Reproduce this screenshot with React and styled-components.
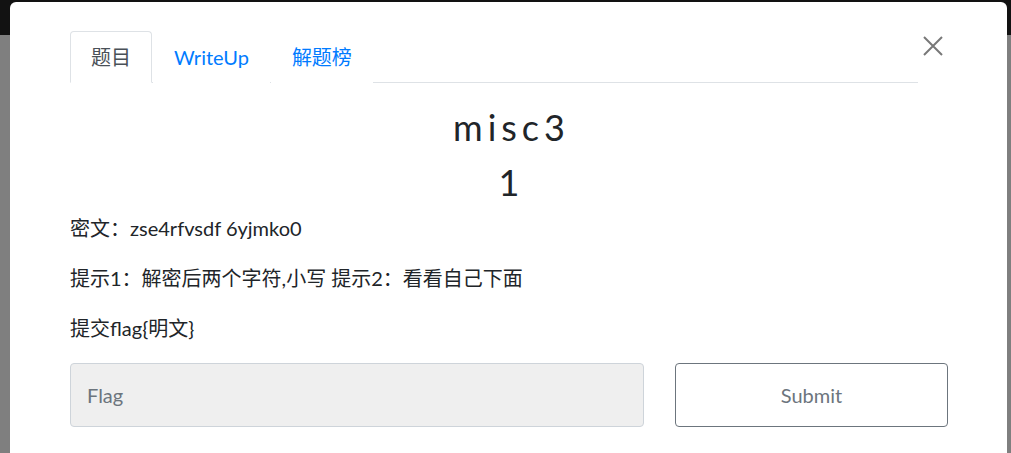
import React from "react"
import styled, { createGlobalStyle } from "styled-components"

const GlobalStyle = createGlobalStyle`
  html, body {
    margin: 0;
    padding: 0;
  }
  body {
    font-family: Lato, "Noto Sans CJK SC", sans-serif;
    background: #7f7f7f;
    overflow: hidden;
  }
  * {
    box-sizing: border-box;
  }
`

const Page = styled.div`
  position: relative;
  width: 1011px;
  height: 453px;
  overflow: hidden;
  background: #7f7f7f;
`

const TopBar = styled.div`
  height: 35px;
  background: #121212;
`

const Modal = styled.div`
  position: absolute;
  top: 2px;
  left: 10px;
  width: 997px;
  height: 480px;
  background: #fff;
  border-radius: 6px;
  padding: 29px 59px 0 60px;
  color: #212529;
`

const Header = styled.div`
  display: flex;
  align-items: flex-start;
`

const Tabs = styled.ul`
  flex: 1;
  display: flex;
  list-style: none;
  margin: 0;
  padding: 0;
  border-bottom: 1px solid #dee2e6;
`

const Tab = styled.li`
  height: 52px;
  margin-bottom: -1px;
  margin-right: 1px;
  padding: 0 20px;
  line-height: 50px;
  font-size: 20px;
  color: ${(p) => (p.$active ? "#495057" : "#007bff")};
  border: 1px solid ${(p) => (p.$active ? "#dee2e6" : "transparent")};
  border-bottom-color: ${(p) => (p.$active ? "#fff" : "transparent")};
  border-radius: 4px 4px 0 0;
  background: #fff;
`

const Close = styled.button`
  width: 30px;
  height: 20px;
  margin-top: 5px;
  padding: 0;
  border: 0;
  background: none;
  display: flex;
  justify-content: center;
  svg {
    display: block;
  }
`

const Title = styled.h2`
  margin: ${(p) => p.$gap || "23px"} 0 0;
  padding-left: ${(p) => p.$spacing || "0"};
  text-align: center;
  font-size: 36px;
  font-weight: 400;
  line-height: 1.2;
  letter-spacing: ${(p) => p.$spacing || "0"};
  color: #212529;
`

const Body = styled.div`
  margin-top: 9px;
`

const Para = styled.p`
  margin: 0 0 20px;
  font-size: 20px;
  line-height: 30px;
  color: #212529;
`

const Row = styled.div`
  display: grid;
  grid-template-columns: 574px 273px;
  column-gap: 31px;
`

const FlagInput = styled.input`
  height: 64px;
  padding: 0 16px;
  font-family: inherit;
  font-size: 20px;
  background: #efefef;
  border: 1px solid #ced4da;
  border-radius: 4px;
  color: #495057;
  outline: none;
  &::placeholder {
    color: #6c757d;
  }
`

const SubmitButton = styled.button`
  height: 64px;
  font-family: inherit;
  font-size: 20px;
  color: #6c757d;
  background: #fff;
  border: 1px solid #6c757d;
  border-radius: 4px;
`

const CloseIcon = () => (
  <svg width="20" height="20" viewBox="0 0 20 20">
    <path d="M1 1 L19 19 M19 1 L1 19" stroke="#787878" strokeWidth="2" />
  </svg>
)

export default function App() {
  return (
    <Page>
      <GlobalStyle />
      <TopBar />
      <Modal>
        <Header>
          <Tabs>
            <Tab $active>题目</Tab>
            <Tab>WriteUp</Tab>
            <Tab>解题榜</Tab>
          </Tabs>
          <Close aria-label="Close">
            <CloseIcon />
          </Close>
        </Header>
        <Title $spacing="5px">misc3</Title>
        <Title as="h3" $gap="12px">1</Title>
        <Body>
          <Para>密文：zse4rfvsdf 6yjmko0</Para>
          <Para>提示1：解密后两个字符,小写 提示2：看看自己下面</Para>
          <Para>提交flag{"{"}明文{"}"}</Para>
          <Row>
            <FlagInput placeholder="Flag" />
            <SubmitButton>Submit</SubmitButton>
          </Row>
        </Body>
      </Modal>
    </Page>
  )
}
